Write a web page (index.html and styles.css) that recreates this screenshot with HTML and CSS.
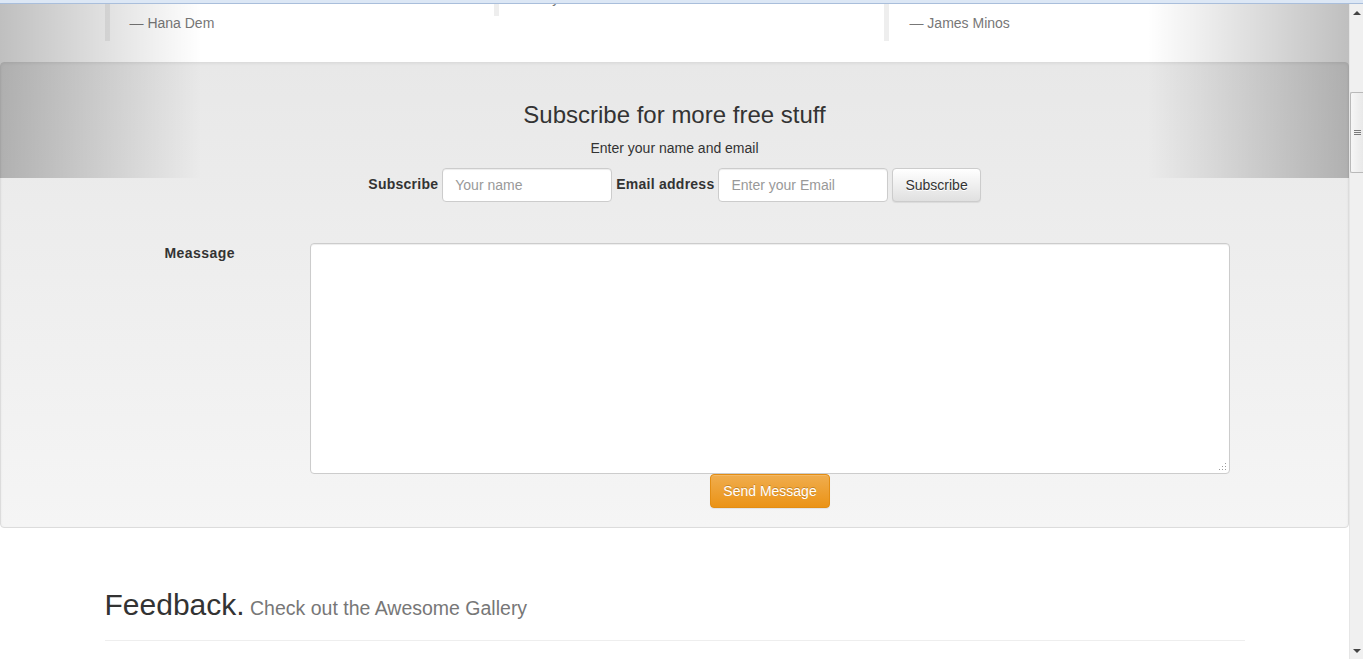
FILE: index.html
```html
<!DOCTYPE html>
<html lang="en">
<head>
<meta charset="utf-8">
<title>Subscribe</title>
<link rel="stylesheet" href="styles.css">
</head>
<body>
<div class="topbar"></div>
<div class="frame">
  <div class="page">
    <div class="scroller">
      <section class="testimonials">
        <div class="container">
          <div class="row">
            <div class="col">
              <blockquote>
                <p>Great templates, clean code and friendly support. Recommended.</p>
                <footer>— Hana Dem</footer>
              </blockquote>
            </div>
            <div class="col">
              <blockquote>
                <p>Simply the best free stuff around.</p>
                <footer>— Jay Lee</footer>
              </blockquote>
            </div>
            <div class="col">
              <blockquote>
                <p>Everything worked out of the box and looked awesome.</p>
                <footer>— James Minos</footer>
              </blockquote>
            </div>
          </div>
        </div>
        <a class="carousel-control left" href="#"></a>
        <a class="carousel-control right" href="#"></a>
      </section>

      <section class="well">
        <h3 class="well-title">Subscribe for more free stuff</h3>
        <p class="well-lead">Enter your name and email</p>
        <form class="subscribe-form">
          <label class="form-label" for="name">Subscribe</label>
          <input class="form-control" id="name" type="text" placeholder="Your name">
          <label class="form-label" for="email">Email address</label>
          <input class="form-control" id="email" type="email" placeholder="Enter your Email">
          <button class="btn btn-default" type="button">Subscribe</button>
        </form>
        <div class="message-row">
          <label class="message-label" for="msg">Meassage</label>
          <div class="message-field">
            <div class="textarea-wrap">
              <textarea class="message-input" id="msg"></textarea>
              <svg class="grip-dots" width="8" height="8" viewBox="0 0 8 8" aria-hidden="true">
                <rect x="6" y="0" width="1" height="1" fill="#9a9a9a"/>
                <rect x="3" y="3" width="1" height="1" fill="#9a9a9a"/>
                <rect x="6" y="3" width="1" height="1" fill="#9a9a9a"/>
                <rect x="0" y="6" width="1" height="1" fill="#9a9a9a"/>
                <rect x="3" y="6" width="1" height="1" fill="#9a9a9a"/>
                <rect x="6" y="6" width="1" height="1" fill="#9a9a9a"/>
              </svg>
            </div>
            <div class="message-actions">
              <button class="btn btn-warning" type="button">Send Message</button>
            </div>
          </div>
        </div>
      </section>

      <section class="feedback">
        <div class="container">
          <div class="page-header">
            <h2>Feedback.<small> Check out the Awesome Gallery</small></h2>
          </div>
        </div>
      </section>
    </div>
  </div>
  <div class="scrollbar">
    <div class="sb-btn"><span class="sb-arrow-up"></span></div>
    <div class="sb-track">
      <div class="sb-thumb"><span class="grip"></span><span class="grip"></span><span class="grip"></span></div>
    </div>
    <div class="sb-btn"><span class="sb-arrow-down"></span></div>
  </div>
</div>
</body>
</html>
```

FILE: styles.css
```css
* { box-sizing: border-box; }

html, body {
  margin: 0;
  padding: 0;
  height: 659px;
  overflow: hidden;
  background: #fff;
  font-family: "Liberation Sans", Arial, Helvetica, sans-serif;
  font-size: 14px;
  line-height: 1.42857;
  color: #333;
}

.topbar {
  height: 4px;
  background: #dce7f5;
  border-bottom: 1px solid #a9bedb;
}

.frame {
  display: flex;
  height: 655px;
}

.page {
  width: 1349px;
  flex: 0 0 1349px;
  overflow: hidden;
}

.scroller {
  margin-top: -63px;
}

.container {
  width: 1170px;
  margin: 0 auto;
  padding: 0 15px;
}

.row {
  display: flex;
  align-items: flex-start;
  margin: 0 -15px;
}

.col {
  width: 33.3333%;
  padding: 0 15px;
}

/* testimonials */
.testimonials {
  position: relative;
  padding-bottom: 1px;
}

blockquote {
  margin: 0 0 20px;
  padding: 12px 20px 8px;
  border-left: 5px solid #eee;
  font-size: 17.5px;
}

blockquote p {
  margin: 0 0 10px;
  line-height: 25px;
}

blockquote footer {
  display: block;
  font-size: 14px;
  line-height: 20px;
  color: #777;
}

.carousel-control {
  position: absolute;
  top: 0;
  width: 15%;
  height: 237px;
  opacity: .5;
  z-index: 2;
}

.carousel-control.left {
  left: 0;
  background-image: linear-gradient(to right, rgba(0,0,0,.5) 0, rgba(0,0,0,.0001) 100%);
}

.carousel-control.right {
  right: 0;
  background-image: linear-gradient(to right, rgba(0,0,0,.0001) 0, rgba(0,0,0,.5) 100%);
}

/* well */
.well {
  padding: 19px;
  border: 1px solid #dcdcdc;
  border-radius: 4px;
  background-color: #f5f5f5;
  background-image: linear-gradient(to bottom, #e8e8e8 0, #f5f5f5 100%);
  box-shadow: inset 0 1px 3px rgba(0,0,0,.05), 0 1px 0 rgba(255,255,255,.1);
}

.well-title {
  margin: 20px 0 10px;
  font-size: 24px;
  font-weight: normal;
  line-height: 1.1;
  text-align: center;
  color: #333;
}

.well-lead {
  margin: 0 0 9px;
  padding-top: 1px;
  text-align: center;
}

.subscribe-form {
  display: flex;
  justify-content: center;
  align-items: center;
  gap: 4px;
  margin: 0;
}

.form-label {
  font-weight: bold;
  letter-spacing: 0.25px;
}

.form-control {
  width: 170px;
  height: 34px;
  padding: 6px 12px;
  font-family: inherit;
  font-size: 14px;
  color: #555;
  background: #fff;
  border: 1px solid #ccc;
  border-radius: 4px;
  box-shadow: inset 0 1px 1px rgba(0,0,0,.075);
}

.form-control::placeholder,
.message-input::placeholder {
  color: #999;
}

.btn {
  height: 34px;
  padding: 6px 12px;
  font-family: inherit;
  font-size: 14px;
  line-height: 20px;
  border: 1px solid transparent;
  border-radius: 4px;
  box-shadow: inset 0 1px 0 rgba(255,255,255,.15), 0 1px 1px rgba(0,0,0,.075);
  cursor: pointer;
}

.btn-default {
  color: #333;
  text-shadow: 0 1px 0 #fff;
  background-color: #e0e0e0;
  background-image: linear-gradient(to bottom, #fff 0, #e0e0e0 100%);
  border-color: #ccc;
}

.btn-warning {
  color: #fff;
  text-shadow: 0 -1px 0 rgba(0,0,0,.2);
  background-color: #eb9316;
  background-image: linear-gradient(to bottom, #f0ad4e 0, #eb9316 100%);
  border-color: #e38d13;
}

.message-row {
  display: grid;
  grid-template-columns: 290px 920px;
  margin-top: 41px;
}

.message-label {
  font-weight: bold;
  letter-spacing: 0.45px;
  text-align: right;
  padding-right: 75px;
  line-height: 20px;
}

.textarea-wrap {
  position: relative;
}

.message-input {
  display: block;
  width: 920px;
  height: 231px;
  margin: 0;
  padding: 6px 12px;
  font-family: inherit;
  font-size: 14px;
  background: #fff;
  border: 1px solid #ccc;
  border-radius: 4px;
  box-shadow: inset 0 1px 1px rgba(0,0,0,.075);
  resize: none;
}

.grip-dots {
  position: absolute;
  right: 3px;
  bottom: 3px;
}

.message-actions {
  display: flex;
  justify-content: center;
}

/* feedback */
.feedback {
  padding-top: 60px;
}

.page-header {
  padding-bottom: 9px;
  border-bottom: 1px solid #eee;
}

.page-header h2 {
  margin: 0 0 10px;
  font-size: 30px;
  font-weight: normal;
  line-height: 1.1;
  color: #333;
}

.page-header h2 small {
  font-size: 65%;
  color: #777;
}

/* fake scrollbar */
.scrollbar {
  flex: 0 0 14px;
  width: 14px;
  display: flex;
  flex-direction: column;
  background: #f0f0f0;
  border-left: 1px solid #e6e6e6;
}

.sb-btn {
  height: 17px;
  display: flex;
  align-items: center;
  justify-content: center;
}

.sb-arrow-up {
  width: 0;
  height: 0;
  border-left: 4px solid transparent;
  border-right: 4px solid transparent;
  border-bottom: 4px solid #444;
}

.sb-arrow-down {
  width: 0;
  height: 0;
  border-left: 4px solid transparent;
  border-right: 4px solid transparent;
  border-top: 4px solid #444;
}

.sb-track {
  flex: 1;
  display: flex;
  flex-direction: column;
}

.sb-thumb {
  margin-top: 71px;
  height: 81px;
  border: 1px solid #b9b9b9;
  border-right: 0;
  border-radius: 2px 0 0 2px;
  background-image: linear-gradient(to right, #f6f6f6 0, #e9e9e9 100%);
  display: flex;
  flex-direction: column;
  align-items: center;
  justify-content: center;
  gap: 1px;
}

.grip {
  display: block;
  width: 7px;
  height: 1px;
  background: #7a7a7a;
}
```
